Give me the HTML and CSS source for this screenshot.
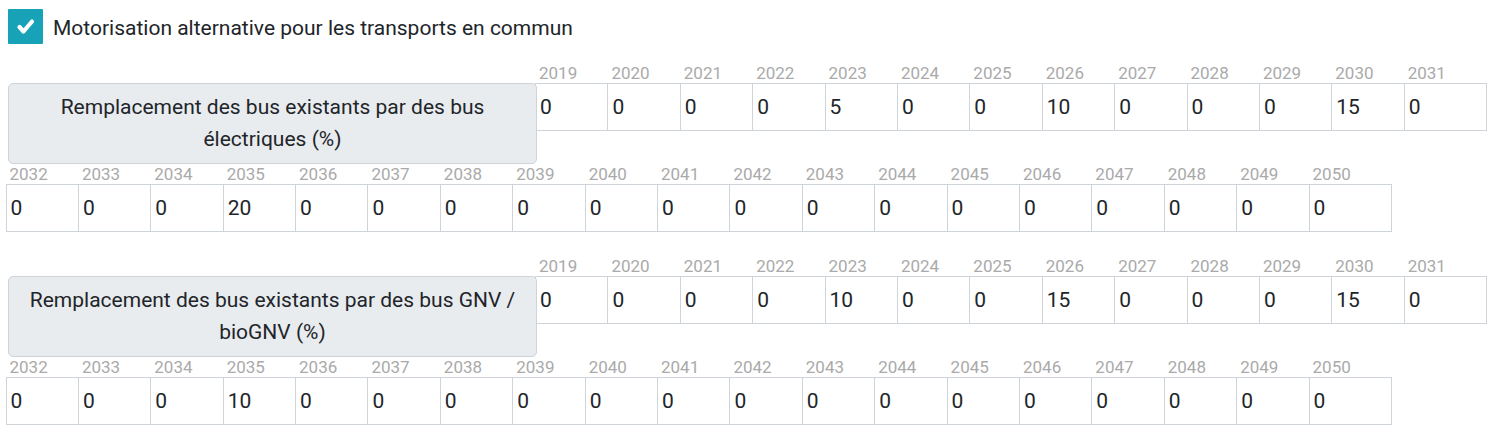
FILE: index.html
```html
<!DOCTYPE html>
<html lang="fr">
<head>
<meta charset="utf-8">
<title>Motorisation alternative</title>
<link rel="stylesheet" href="styles.css">
</head>
<body>
<div class="page">
  <label class="check-row">
    <span class="checkbox">
      <svg width="35" height="35" viewBox="0 0 35 35"><polyline points="11.5,18 15.5,22.5 24,12.5" fill="none" stroke="#fff" stroke-width="4.2" stroke-linecap="round" stroke-linejoin="round"/></svg>
    </span>
    <span class="check-text">Motorisation alternative pour les transports en commun</span>
  </label>

  <div class="block">
    <div class="label-box">Remplacement des bus existants par des bus électriques (%)</div>
    <div class="cell"><span class="year">2019</span><input class="val" value="0"></div>
    <div class="cell"><span class="year">2020</span><input class="val" value="0"></div>
    <div class="cell"><span class="year">2021</span><input class="val" value="0"></div>
    <div class="cell"><span class="year">2022</span><input class="val" value="0"></div>
    <div class="cell"><span class="year">2023</span><input class="val" value="5"></div>
    <div class="cell"><span class="year">2024</span><input class="val" value="0"></div>
    <div class="cell"><span class="year">2025</span><input class="val" value="0"></div>
    <div class="cell"><span class="year">2026</span><input class="val" value="10"></div>
    <div class="cell"><span class="year">2027</span><input class="val" value="0"></div>
    <div class="cell"><span class="year">2028</span><input class="val" value="0"></div>
    <div class="cell"><span class="year">2029</span><input class="val" value="0"></div>
    <div class="cell"><span class="year">2030</span><input class="val" value="15"></div>
    <div class="cell"><span class="year">2031</span><input class="val" value="0"></div>
    <div class="cell"><span class="year">2032</span><input class="val" value="0"></div>
    <div class="cell"><span class="year">2033</span><input class="val" value="0"></div>
    <div class="cell"><span class="year">2034</span><input class="val" value="0"></div>
    <div class="cell"><span class="year">2035</span><input class="val" value="20"></div>
    <div class="cell"><span class="year">2036</span><input class="val" value="0"></div>
    <div class="cell"><span class="year">2037</span><input class="val" value="0"></div>
    <div class="cell"><span class="year">2038</span><input class="val" value="0"></div>
    <div class="cell"><span class="year">2039</span><input class="val" value="0"></div>
    <div class="cell"><span class="year">2040</span><input class="val" value="0"></div>
    <div class="cell"><span class="year">2041</span><input class="val" value="0"></div>
    <div class="cell"><span class="year">2042</span><input class="val" value="0"></div>
    <div class="cell"><span class="year">2043</span><input class="val" value="0"></div>
    <div class="cell"><span class="year">2044</span><input class="val" value="0"></div>
    <div class="cell"><span class="year">2045</span><input class="val" value="0"></div>
    <div class="cell"><span class="year">2046</span><input class="val" value="0"></div>
    <div class="cell"><span class="year">2047</span><input class="val" value="0"></div>
    <div class="cell"><span class="year">2048</span><input class="val" value="0"></div>
    <div class="cell"><span class="year">2049</span><input class="val" value="0"></div>
    <div class="cell"><span class="year">2050</span><input class="val" value="0"></div>
  </div>

  <div class="block">
    <div class="label-box">Remplacement des bus existants par des bus GNV / bioGNV (%)</div>
    <div class="cell"><span class="year">2019</span><input class="val" value="0"></div>
    <div class="cell"><span class="year">2020</span><input class="val" value="0"></div>
    <div class="cell"><span class="year">2021</span><input class="val" value="0"></div>
    <div class="cell"><span class="year">2022</span><input class="val" value="0"></div>
    <div class="cell"><span class="year">2023</span><input class="val" value="10"></div>
    <div class="cell"><span class="year">2024</span><input class="val" value="0"></div>
    <div class="cell"><span class="year">2025</span><input class="val" value="0"></div>
    <div class="cell"><span class="year">2026</span><input class="val" value="15"></div>
    <div class="cell"><span class="year">2027</span><input class="val" value="0"></div>
    <div class="cell"><span class="year">2028</span><input class="val" value="0"></div>
    <div class="cell"><span class="year">2029</span><input class="val" value="0"></div>
    <div class="cell"><span class="year">2030</span><input class="val" value="15"></div>
    <div class="cell"><span class="year">2031</span><input class="val" value="0"></div>
    <div class="cell"><span class="year">2032</span><input class="val" value="0"></div>
    <div class="cell"><span class="year">2033</span><input class="val" value="0"></div>
    <div class="cell"><span class="year">2034</span><input class="val" value="0"></div>
    <div class="cell"><span class="year">2035</span><input class="val" value="10"></div>
    <div class="cell"><span class="year">2036</span><input class="val" value="0"></div>
    <div class="cell"><span class="year">2037</span><input class="val" value="0"></div>
    <div class="cell"><span class="year">2038</span><input class="val" value="0"></div>
    <div class="cell"><span class="year">2039</span><input class="val" value="0"></div>
    <div class="cell"><span class="year">2040</span><input class="val" value="0"></div>
    <div class="cell"><span class="year">2041</span><input class="val" value="0"></div>
    <div class="cell"><span class="year">2042</span><input class="val" value="0"></div>
    <div class="cell"><span class="year">2043</span><input class="val" value="0"></div>
    <div class="cell"><span class="year">2044</span><input class="val" value="0"></div>
    <div class="cell"><span class="year">2045</span><input class="val" value="0"></div>
    <div class="cell"><span class="year">2046</span><input class="val" value="0"></div>
    <div class="cell"><span class="year">2047</span><input class="val" value="0"></div>
    <div class="cell"><span class="year">2048</span><input class="val" value="0"></div>
    <div class="cell"><span class="year">2049</span><input class="val" value="0"></div>
    <div class="cell"><span class="year">2050</span><input class="val" value="0"></div>
  </div>
</div>
</body>
</html>
```

FILE: styles.css
```css
html, body {
  margin: 0;
  padding: 0;
  background: #fff;
}

body {
  font-family: Roboto, "Liberation Sans", sans-serif;
  color: #212529;
}

.page {
  padding: 9px 8px 0 8px;
}

.check-row {
  display: flex;
  align-items: center;
  gap: 10px;
  height: 35px;
}

.checkbox {
  display: block;
  width: 35px;
  height: 35px;
  background: #17a2b8;
  border-radius: 1px;
}

.checkbox svg {
  display: block;
}

.check-text {
  font-size: 21px;
  line-height: 24px;
  padding-top: 2px;
  color: #212529;
}

.block {
  display: flex;
  flex-wrap: wrap;
  align-items: flex-start;
  margin-left: -2.5px;
  margin-top: 18.5px;
  margin-bottom: 24px;
}

.block + .block {
  margin-top: 0;
}

.label-box {
  position: relative;
  z-index: 1;
  box-sizing: border-box;
  width: 529px;
  height: 81px;
  margin: 20px -2px 0 2.5px;
  padding: 7.5px 12px;
  background: #e9ecef;
  border: 1px solid #ced4da;
  border-radius: 5px;
  font-size: 21px;
  line-height: 32px;
  text-align: center;
  color: #212529;
}

.cell {
  width: 72.4px;
  display: flex;
  flex-direction: column;
}

.year {
  display: block;
  height: 20px;
  padding-left: 4px;
  font-size: 17px;
  line-height: 20px;
  color: #aaaaaa;
  white-space: nowrap;
}

.val {
  box-sizing: border-box;
  width: 83px;
  height: 48px;
  margin: 0;
  padding: 1px 4px 0;
  border: 1px solid #ced4da;
  border-radius: 0;
  background: #fff;
  font-family: Roboto, "Liberation Sans", sans-serif;
  font-size: 21px;
  color: #212529;
  outline: none;
}
```
